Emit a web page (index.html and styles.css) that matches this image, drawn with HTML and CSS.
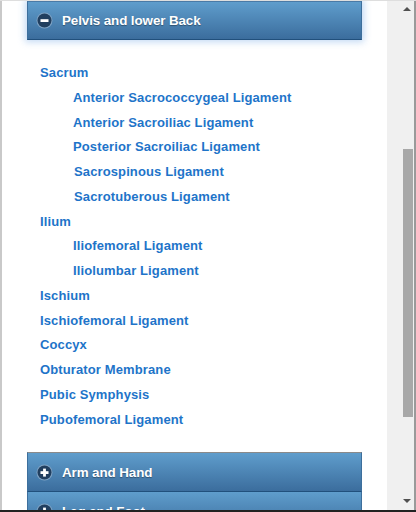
FILE: index.html
```html
<!DOCTYPE html>
<html>
<head>
<meta charset="utf-8">
<link rel="stylesheet" href="styles.css">
</head>
<body>
<div class="frame">
  <div class="content">
    <div class="panel-head active">
      <span class="toggle"><svg width="17" height="17" viewBox="0 0 17 17"><circle cx="8.5" cy="8.5" r="8" fill="#7fa3c4"/><circle cx="8.5" cy="8.5" r="7" fill="#213f5f"/><rect x="4.5" y="7.2" width="8" height="2.8" fill="#fff"/></svg></span>
      <span class="title">Pelvis and lower Back</span>
    </div>
    <ul class="tree">
      <li><a class="lvl1">Sacrum</a></li>
      <li><a class="lvl2">Anterior Sacrococcygeal Ligament</a></li>
      <li><a class="lvl2">Anterior Sacroiliac Ligament</a></li>
      <li><a class="lvl2">Posterior Sacroiliac Ligament</a></li>
      <li><a class="lvl2 nudge">Sacrospinous Ligament</a></li>
      <li><a class="lvl2 nudge">Sacrotuberous Ligament</a></li>
      <li><a class="lvl1">Ilium</a></li>
      <li><a class="lvl2">Iliofemoral Ligament</a></li>
      <li><a class="lvl2">Iliolumbar Ligament</a></li>
      <li><a class="lvl1">Ischium</a></li>
      <li><a class="lvl1">Ischiofemoral Ligament</a></li>
      <li><a class="lvl1">Coccyx</a></li>
      <li><a class="lvl1">Obturator Membrane</a></li>
      <li><a class="lvl1">Pubic Symphysis</a></li>
      <li><a class="lvl1">Pubofemoral Ligament</a></li>
    </ul>
    <div class="panel-head closed">
      <span class="toggle"><svg width="17" height="17" viewBox="0 0 17 17"><circle cx="8.5" cy="8.5" r="8" fill="#7fa3c4"/><circle cx="8.5" cy="8.5" r="7" fill="#213f5f"/><rect x="4.5" y="7.2" width="8" height="2.8" fill="#fff"/><rect x="7.1" y="4.6" width="2.8" height="8" fill="#fff"/></svg></span>
      <span class="title">Arm and Hand</span>
    </div>
    <div class="panel-head closed next">
      <span class="toggle"><svg width="17" height="17" viewBox="0 0 17 17"><circle cx="8.5" cy="8.5" r="8" fill="#7fa3c4"/><circle cx="8.5" cy="8.5" r="7" fill="#213f5f"/><rect x="4.5" y="7.2" width="8" height="2.8" fill="#fff"/><rect x="7.1" y="4.6" width="2.8" height="8" fill="#fff"/></svg></span>
      <span class="title">Leg and Foot</span>
    </div>
  </div>
  <div class="scrollbar">
    <div class="arrow up"></div>
    <div class="track"><div class="thumb"></div></div>
    <div class="arrow down"></div>
  </div>
</div>
<div class="taskbar"></div>
</body>
</html>
```
FILE: styles.css
```css
html, body {
  margin: 0;
  padding: 0;
  background: #ffffff;
  overflow: hidden;
}
body {
  width: 416px;
  height: 512px;
  font-family: "Liberation Sans", Arial, sans-serif;
}
.frame {
  display: flex;
  height: 510px;
  border-top: 1px solid #dedede;
  box-sizing: border-box;
  overflow: hidden;
}
.content {
  flex: 1;
  border-left: 2px solid #c9c9c9;
  padding: 0 25px 0 25px;
  overflow: hidden;
}
.panel-head {
  display: flex;
  align-items: center;
  height: 38px;
  padding-left: 8px;
  background: linear-gradient(#5f9dcc, #3b6d9d);
  border: 1px solid #3d6f9c;
  border-bottom: 1px solid #21507c;
  color: #fff;
  box-sizing: content-box;
}
.panel-head.active {
  box-shadow: 0 0 7px 2px rgba(120, 170, 230, 0.45);
  height: 37px;
  border-top-color: #4a7aa6;
}
.panel-head.closed {
  border-top: 1px solid #8a8a8a;
  margin-top: 21px;
}
.panel-head.next {
  margin-top: 0;
  border-top: 0;
}
.toggle {
  width: 17px;
  height: 17px;
  display: flex;
}
.title {
  margin-left: 9px;
  font-weight: bold;
  font-size: 13.4px;
  text-shadow: 0 1px 1px rgba(0, 0, 0, 0.35);
  letter-spacing: -0.1px;
}
.tree {
  list-style: none;
  margin: 0;
  padding: 20px 0 0 0;
}
.tree li {
  line-height: 24.75px;
  height: 24.75px;
}
.tree a {
  color: #1e74c9;
  font-weight: bold;
  font-size: 13px;
  letter-spacing: 0.12px;
  text-decoration: none;
}
.lvl1 { padding-left: 13px; }
.lvl2 { padding-left: 46px; }
.lvl2.nudge { padding-left: 47px; }
.scrollbar {
  width: 27px;
  background: #f0f0f0;
  border-right: 2px solid #9a9a9a;
  display: flex;
  flex-direction: column;
  align-items: flex-end;
}
.arrow {
  width: 0;
  height: 0;
  border-left: 4px solid transparent;
  border-right: 4px solid transparent;
  margin-right: 3px;
}
.arrow.up {
  border-bottom: 4px solid #505050;
  margin-top: 6px;
}
.arrow.down {
  border-top: 4px solid #505050;
  margin-bottom: 7px;
}
.track {
  flex: 1;
  display: flex;
  flex-direction: column;
  width: 100%;
  align-items: flex-end;
}
.thumb {
  width: 10px;
  height: 268px;
  margin-top: 138px;
  margin-right: 1px;
  background: #a8a8a8;
}
.taskbar {
  height: 2px;
  background: #222;
}
```
